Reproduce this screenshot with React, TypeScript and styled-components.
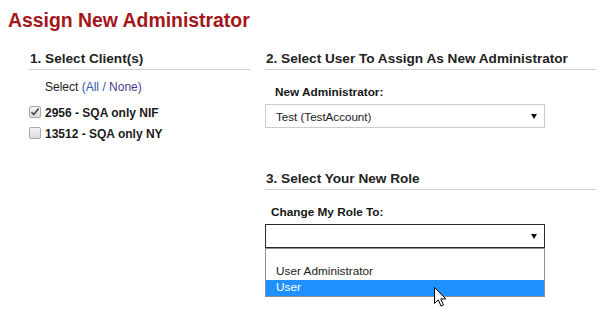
import React from "react";
import styled, { createGlobalStyle } from "styled-components";

const Global = createGlobalStyle`
  html, body { margin: 0; padding: 0; background: #fff; }
  body { font-family: "Liberation Sans", Arial, sans-serif; color: #222; }
`;

const Page = styled.div`
  position: relative;
  width: 612px;
  height: 318px;
  padding-top: 9px;
  box-sizing: border-box;
  overflow: hidden;
`;

const Title = styled.h1`
  margin: 0;
  padding-left: 8px;
  font-size: 19.4px;
  line-height: 22px;
  font-weight: bold;
  color: #a4161b;
`;

const Columns = styled.div`
  display: flex;
  gap: 15px;
  padding-left: 29px;
  margin-top: 20px;
`;

const Column = styled.div<{ $w: number }>`
  width: ${(p) => p.$w}px;
  display: flex;
  flex-direction: column;
`;

const Heading = styled.h2<{ $mt?: number }>`
  margin: ${(p) => p.$mt ?? 0}px 0 0;
  padding: 0 0 2px 1px;
  font-size: 13.6px;
  line-height: 16px;
  font-weight: bold;
  color: #222;
  border-bottom: 1px solid #cfcfcf;
`;

const SelectLinks = styled.div`
  margin-top: 10px;
  padding-left: 16px;
  font-size: 12px;
  line-height: 14px;
  color: #222;
`;

const Link = styled.span<{ $c: string }>`
  color: ${(p) => p.$c};
`;

const ClientList = styled.div`
  margin-top: 12px;
  display: flex;
  flex-direction: column;
  gap: 7px;
`;

const ClientRow = styled.label`
  display: flex;
  align-items: flex-start;
  gap: 4px;
  font-size: 12px;
  line-height: 14px;
  font-weight: bold;
  color: #1a1a1a;
`;

const Box = styled.span`
  width: 12px;
  height: 12px;
  margin-top: 0px;
  box-sizing: border-box;
  border: 1px solid #a9a9a9;
  border-radius: 2px;
  background: linear-gradient(#f4f4f4, #dcdcdc);
  display: flex;
  align-items: center;
  justify-content: center;
`;

const Field = styled.div<{ $mt: number; $indent: number }>`
  margin-top: ${(p) => p.$mt}px;
  display: flex;
  flex-direction: column;
  gap: 5px;
  & > span {
    padding-left: ${(p) => p.$indent}px;
  }
`;

const Label = styled.span`
  font-size: 11.8px;
  line-height: 14px;
  font-weight: bold;
  color: #151515;
`;

const SelectWrap = styled.div`
  position: relative;
  width: 280px;
`;

const SelectBox = styled.div<{ $focus?: boolean }>`
  height: 24px;
  box-sizing: border-box;
  border: 1px solid ${(p) => (p.$focus ? "#2b2b2b" : "#cccccc")};
  background: #fff;
  display: flex;
  align-items: center;
  justify-content: space-between;
  padding: 0 7px 0 10px;
  font-size: 11.6px;
  color: #1a1a1a;
`;

const DropList = styled.div`
  position: absolute;
  left: 0;
  top: 24px;
  width: 280px;
  box-sizing: border-box;
  border: 1px solid #8f8f8f;
  background: #fff;
  z-index: 2;
`;

const Option = styled.div<{ $active?: boolean; $empty?: boolean }>`
  height: ${(p) => (p.$empty ? 15 : 16)}px;
  box-sizing: border-box;
  padding: 0 10px;
  font-size: 11.8px;
  line-height: 14px;
  color: ${(p) => (p.$active ? "#fff" : "#1a1a1a")};
  background: ${(p) => (p.$active ? "#1e90ff" : "transparent")};
`;

const Cursor = styled.svg`
  position: absolute;
  left: 434px;
  top: 287px;
  z-index: 5;
`;

const Arrow = () => (
  <svg width="6" height="5" viewBox="0 0 6 5">
    <polygon points="0,0 6,0 3,5" fill="#111" />
  </svg>
);

const Check = () => (
  <svg width="10" height="10" viewBox="0 0 10 10">
    <path d="M1.5 5.2 L3.8 7.6 L8.6 1.6" fill="none" stroke="#4a4a4a" strokeWidth="1.6" />
  </svg>
);

export default function App() {
  return (
    <>
      <Global />
      <Page>
        <Title>Assign New Administrator</Title>
        <Columns>
          <Column $w={221}>
            <Heading>1. Select Client(s)</Heading>
            <SelectLinks>
              Select <Link $c="#2f5aa8">(All</Link> <Link $c="#3a4a96">/</Link>{" "}
              <Link $c="#4b3a96">None)</Link>
            </SelectLinks>
            <ClientList>
              <ClientRow>
                <Box>
                  <Check />
                </Box>
                2956 - SQA only NIF
              </ClientRow>
              <ClientRow>
                <Box />
                13512 - SQA only NY
              </ClientRow>
            </ClientList>
          </Column>
          <Column $w={331}>
            <Heading>2. Select User To Assign As New Administrator</Heading>
            <Field $mt={15} $indent={10}>
              <Label>New Administrator:</Label>
              <SelectWrap>
                <SelectBox>
                  Test (TestAccount)
                  <Arrow />
                </SelectBox>
              </SelectWrap>
            </Field>
            <Heading $mt={43}>3. Select Your New Role</Heading>
            <Field $mt={15} $indent={6}>
              <Label>Change My Role To:</Label>
              <SelectWrap>
                <SelectBox $focus>
                  <span />
                  <Arrow />
                </SelectBox>
                <DropList>
                  <Option $empty />
                  <Option>User Administrator</Option>
                  <Option $active>User</Option>
                </DropList>
              </SelectWrap>
            </Field>
          </Column>
        </Columns>
        <Cursor width="13" height="21" viewBox="0 0 13 21">
          <path
            d="M0.5 0.5 L0.5 16.5 L4.3 12.8 L7 19 L9.4 18 L6.8 11.9 L11.8 11.9 Z"
            fill="#fff"
            stroke="#000"
            strokeWidth="1"
            strokeLinejoin="miter"
          />
        </Cursor>
      </Page>
    </>
  );
}
